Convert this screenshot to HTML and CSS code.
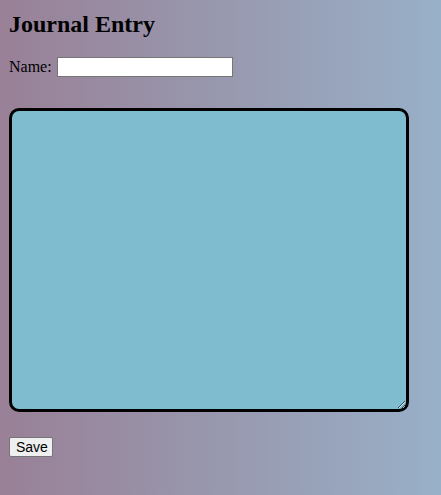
FILE: index.html
```html
<!DOCTYPE html>
<html>
<head>
<meta charset="utf-8">
<link rel="stylesheet" href="styles.css">
</head>
<body>
<main class="journal">
  <h2 class="title">Journal Entry</h2>
  <div class="name-row">
    <label class="name-label" for="name">Name:</label>
    <input class="name-input" id="name" type="text">
  </div>
  <textarea class="entry"></textarea>
  <div class="actions">
    <button class="save" type="button">Save</button>
  </div>
</main>
</body>
</html>
```

FILE: styles.css
```css
html {
  min-height: 100%;
  background: linear-gradient(to right, #998097 0%, #9898ae 50%, #98b0c8 100%);
}
body {
  margin: 0;
  padding: 8px 8px 0 9px;
  font-family: "Liberation Serif", "Times New Roman", serif;
  font-size: 16px;
  color: #000;
}
.journal {
  display: flex;
  flex-direction: column;
  align-items: flex-start;
}
.title {
  margin: 2px 0 0 0;
  font-size: 24px;
  font-weight: bold;
  line-height: 28px;
}
.name-row {
  margin-top: 19px;
  display: flex;
  align-items: center;
  gap: 5px;
  height: 20px;
}
.name-label {
  font-size: 16px;
}
.name-input {
  box-sizing: border-box;
  width: 176px;
  height: 20px;
  margin: 0;
  border: 1px solid #767676;
  background: #fff;
  padding: 1px 2px;
}
.entry {
  box-sizing: border-box;
  margin-top: 31px;
  width: 400px;
  height: 304px;
  border: 3px solid #000;
  border-radius: 10px;
  background: #80bcd0;
  resize: both;
  padding: 2px;
}
.actions {
  margin-top: 25px;
}
.save {
  box-sizing: border-box;
  font-family: Arial, "Liberation Sans", sans-serif;
  font-size: 14px;
  margin: 0;
  padding: 0 6px;
  width: 44px;
  height: 20px;
  background: #efefef;
  border: 1px solid #767676;
  border-radius: 2px;
}
```
